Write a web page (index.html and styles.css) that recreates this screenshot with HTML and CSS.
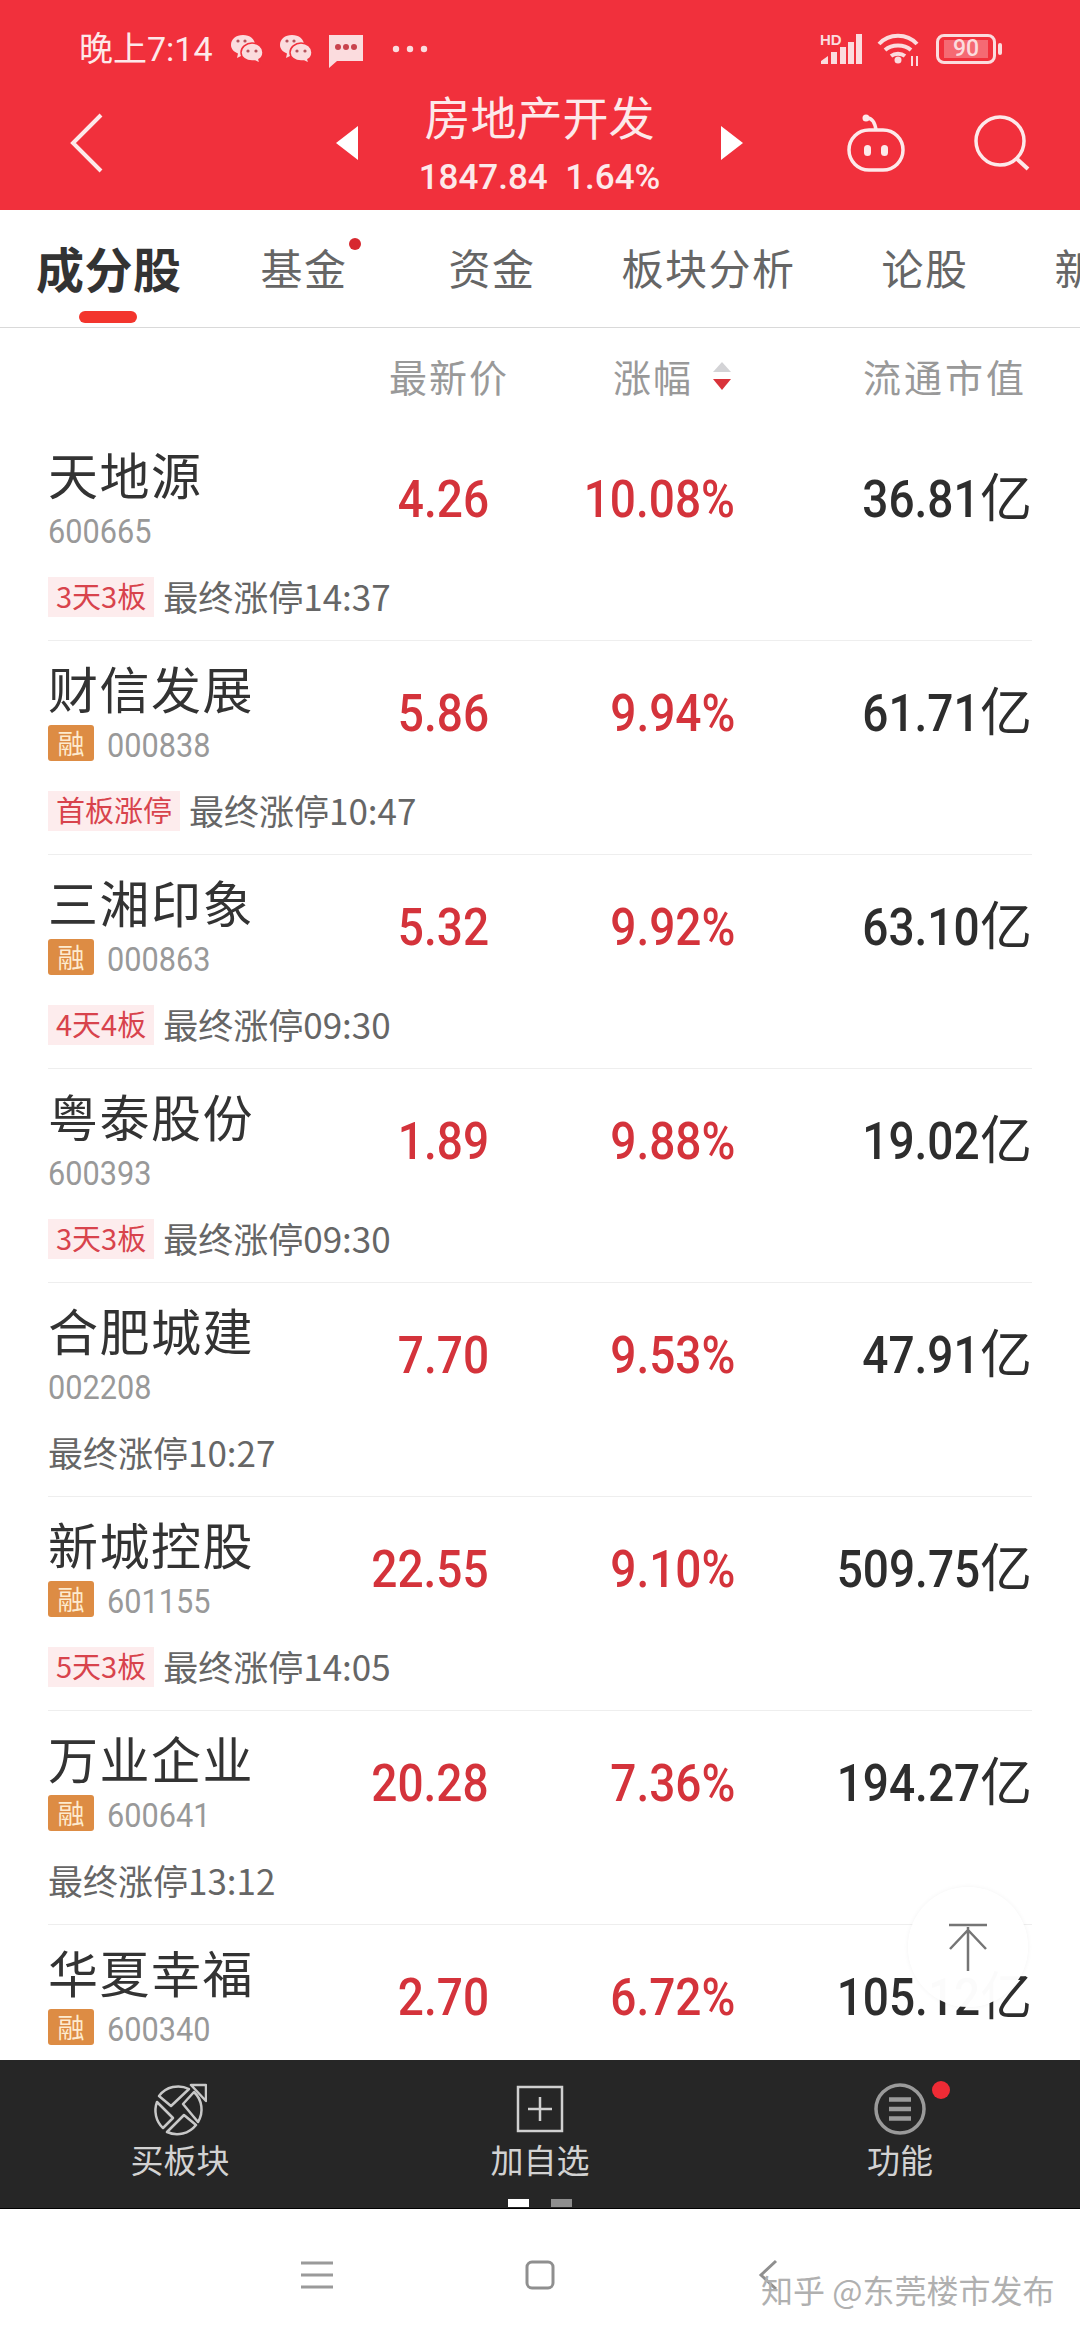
FILE: index.html
```html
<!DOCTYPE html>
<html lang="zh-CN">
<head>
    <meta charset="UTF-8">
    <meta name="viewport" content="width=device-width, initial-scale=1.0">
    <title>房地产开发</title>
    <link rel="stylesheet" href="styles.css">
</head>
<body>
    <div class="page">
        <header class="top">
            <div class="status">
                <span class="clock">晚上7:14</span>
                <svg class="st-wx" width="34" height="30" viewBox="0 0 34 30"><path d="M13 1c7 0 12 4 12 10 0 6-5 10-12 10l-6 3 1-4.500C4 18 1 15 1 11 1 5 6 1 13 1z" fill="#fbdcde"/><path d="M22 9c6 0 11 4 11 9.500 0 3-1.500 5.500-4 7l1 4-5-2.500h-3c-6 0-11-3.500-11-8.500S16 9 22 9z" fill="#fbdcde" stroke="#f1303c" stroke-width="1.500"/><circle cx="8" cy="7" r="1.600" fill="#b5525c"/><circle cx="15" cy="7" r="1.600" fill="#b5525c"/><circle cx="18" cy="17" r="1.600" fill="#b5525c"/><circle cx="26" cy="17" r="1.600" fill="#b5525c"/></svg>
                <svg class="st-wx" width="34" height="30" viewBox="0 0 34 30"><path d="M13 1c7 0 12 4 12 10 0 6-5 10-12 10l-6 3 1-4.500C4 18 1 15 1 11 1 5 6 1 13 1z" fill="#fbdcde"/><path d="M22 9c6 0 11 4 11 9.500 0 3-1.500 5.500-4 7l1 4-5-2.500h-3c-6 0-11-3.500-11-8.500S16 9 22 9z" fill="#fbdcde" stroke="#f1303c" stroke-width="1.500"/><circle cx="8" cy="7" r="1.600" fill="#b5525c"/><circle cx="15" cy="7" r="1.600" fill="#b5525c"/><circle cx="18" cy="17" r="1.600" fill="#b5525c"/><circle cx="26" cy="17" r="1.600" fill="#b5525c"/></svg>
                <svg class="st-msg" width="36" height="34" viewBox="0 0 36 34"><path d="M1 1h34v26H9l-8 7z" fill="#fbdcde"/><circle cx="10" cy="13" r="3" fill="#c9434d"/><circle cx="18" cy="13" r="3" fill="#c9434d"/><circle cx="26" cy="13" r="3" fill="#c9434d"/></svg>
                <svg class="st-more" width="36" height="8" viewBox="0 0 36 8"><circle cx="4" cy="4" r="3.200" fill="#fbdcde"/><circle cx="18" cy="4" r="3.200" fill="#fbdcde"/><circle cx="32" cy="4" r="3.200" fill="#fbdcde"/></svg>
                <svg class="st-signal" width="42" height="32" viewBox="0 0 42 32"><text x="0" y="12" class="hd">HD</text><path d="M1 31v-3l7-5v8zM11 31V19h6v12zM20 31V14h6v17zM28 31V9h6v22zM36 31V1h6v30z" fill="#fbdcde"/></svg>
                <svg class="st-wifi" width="44" height="34" viewBox="0 0 44 34"><g fill="none" stroke="#fbdcde" stroke-width="4"><path d="M2 12C12 1 30 1 40 12"/><path d="M8 18c7-6 19-6 26 0"/><path d="M14 24c4-3 10-3 14 0"/></g><circle cx="21" cy="28" r="3.500" fill="#fbdcde"/><path d="M35 24v10M40 24v10" stroke="#fbdcde" stroke-width="2"/></svg>
                <div class="battery"><span class="battery-fill">90</span></div>
                <span class="battery-nub"></span>
            </div>
            <div class="navrow">
                <div class="nav-left">
                    <svg width="33" height="60" viewBox="0 0 33 60"><path d="M31 2L3 30l28 28" fill="none" stroke="#fde9ea" stroke-width="4"/></svg>
                </div>
                <svg width="22" height="34" viewBox="0 0 22 34"><path d="M22 0v34L0 17z" fill="#fff"/></svg>
                <div class="nav-mid">
                    <div class="sector">房地产开发</div>
                    <div class="sector-sub">1847.84&nbsp;&nbsp;1.64%</div>
                </div>
                <svg width="22" height="34" viewBox="0 0 22 34"><path d="M0 0v34l22-17z" fill="#fff"/></svg>
                <svg class="robot" width="58" height="58" viewBox="0 0 58 58"><g fill="none" stroke="#fde9ea" stroke-width="3.500"><rect x="2" y="16" width="54" height="40" rx="20"/><path d="M20 4c5 0 8 5 9 12"/></g><circle cx="19" cy="4" r="3.500" fill="#fde9ea"/><rect x="17" y="31" width="7" height="11" rx="3.500" fill="#fde9ea"/><rect x="34" y="31" width="7" height="11" rx="3.500" fill="#fde9ea"/></svg>
                <svg class="search" width="56" height="56" viewBox="0 0 56 56"><circle cx="26" cy="26" r="24" fill="none" stroke="#fde9ea" stroke-width="3.500"/><path d="M43 44l11 10" stroke="#fde9ea" stroke-width="4"/></svg>
            </div>
        </header>

        <nav class="tabs">
            <span class="tab tab-on">成分股</span>
            <span class="tab tab-dot">基金</span>
            <span class="tab">资金</span>
            <span class="tab">板块分析</span>
            <span class="tab">论股</span>
            <span class="tab">新闻</span>
        </nav>

        <main class="list">
            <div class="head">
                <span class="head-name"></span>
                <span class="head-cell head-price">最新价</span>
                <span class="head-cell head-sort">涨幅
                    <svg width="18" height="28" viewBox="0 0 18 28"><path d="M9 0l9 10H0z" fill="#d3d3d6"/><path d="M0 17h18l-9 11z" fill="#d9333a"/></svg>
                </span>
                <span class="head-cell head-cap">流通市值</span>
            </div>

            <div class="row">
                <div class="stock"><div class="name">天地源</div><div class="code-line"><span class="code">600665</span></div></div>
                <div class="val"><span class="num">4.26</span></div>
                <div class="val"><span class="num">10.08%</span></div>
                <div class="val cap"><span class="num">36.81</span>亿</div>
                <div class="limit"><span class="tag">3天3板</span>最终涨停14:37</div>
            </div>
            <div class="row">
                <div class="stock"><div class="name">财信发展</div><div class="code-line"><span class="rong">融</span><span class="code">000838</span></div></div>
                <div class="val"><span class="num">5.86</span></div>
                <div class="val"><span class="num">9.94%</span></div>
                <div class="val cap"><span class="num">61.71</span>亿</div>
                <div class="limit"><span class="tag">首板涨停</span>最终涨停10:47</div>
            </div>
            <div class="row">
                <div class="stock"><div class="name">三湘印象</div><div class="code-line"><span class="rong">融</span><span class="code">000863</span></div></div>
                <div class="val"><span class="num">5.32</span></div>
                <div class="val"><span class="num">9.92%</span></div>
                <div class="val cap"><span class="num">63.10</span>亿</div>
                <div class="limit"><span class="tag">4天4板</span>最终涨停09:30</div>
            </div>
            <div class="row">
                <div class="stock"><div class="name">粤泰股份</div><div class="code-line"><span class="code">600393</span></div></div>
                <div class="val"><span class="num">1.89</span></div>
                <div class="val"><span class="num">9.88%</span></div>
                <div class="val cap"><span class="num">19.02</span>亿</div>
                <div class="limit"><span class="tag">3天3板</span>最终涨停09:30</div>
            </div>
            <div class="row">
                <div class="stock"><div class="name">合肥城建</div><div class="code-line"><span class="code">002208</span></div></div>
                <div class="val"><span class="num">7.70</span></div>
                <div class="val"><span class="num">9.53%</span></div>
                <div class="val cap"><span class="num">47.91</span>亿</div>
                <div class="limit">最终涨停10:27</div>
            </div>
            <div class="row">
                <div class="stock"><div class="name">新城控股</div><div class="code-line"><span class="rong">融</span><span class="code">601155</span></div></div>
                <div class="val"><span class="num">22.55</span></div>
                <div class="val"><span class="num">9.10%</span></div>
                <div class="val cap"><span class="num">509.75</span>亿</div>
                <div class="limit"><span class="tag">5天3板</span>最终涨停14:05</div>
            </div>
            <div class="row">
                <div class="stock"><div class="name">万业企业</div><div class="code-line"><span class="rong">融</span><span class="code">600641</span></div></div>
                <div class="val"><span class="num">20.28</span></div>
                <div class="val"><span class="num">7.36%</span></div>
                <div class="val cap"><span class="num">194.27</span>亿</div>
                <div class="limit">最终涨停13:12</div>
            </div>
            <div class="row">
                <div class="stock"><div class="name">华夏幸福</div><div class="code-line"><span class="rong">融</span><span class="code">600340</span></div></div>
                <div class="val"><span class="num">2.70</span></div>
                <div class="val"><span class="num">6.72%</span></div>
                <div class="val cap"><span class="num">105.12</span>亿</div>
            </div>

            <div class="to-top">
                <svg width="40" height="48" viewBox="0 0 40 48"><path d="M1 2h38M20 4v44M2 26L20 7l18 19" fill="none" stroke="#757575" stroke-width="2.500"/></svg>
            </div>
        </main>

        <footer class="bar">
            <div class="bar-items">
                <div class="bar-item">
                    <svg width="54" height="54" viewBox="0 0 54 54"><g fill="none" stroke="#c8c8c8" stroke-width="2.500" stroke-linejoin="round"><path d="M6 14A24 24 0 0 1 36 7L18 24z"/><path d="M4 20l16 16-10 10A24 24 0 0 1 4 20z"/><path d="M30 22l11-12A24 24 0 0 1 45 40z"/><path d="M31 33l12 10A24 24 0 0 1 14 50z"/><path d="M38 3h15v16z"/></g></svg>
                    <span class="bar-label">买板块</span>
                </div>
                <div class="bar-item">
                    <svg width="48" height="48" viewBox="0 0 48 48"><path d="M2 2h44v44H2zM24 12v24M12 24h24" fill="none" stroke="#d0d0d0" stroke-width="2.500"/></svg>
                    <span class="bar-label">加自选</span>
                </div>
                <div class="bar-item">
                    <svg width="52" height="52" viewBox="0 0 52 52"><circle cx="26" cy="26" r="24" fill="none" stroke="#9a9a9a" stroke-width="3.500"/><path d="M15 16.500h22M15 26h22M15 35.500h22" stroke="#9a9a9a" stroke-width="4.500"/></svg>
                    <span class="fn-dot"></span>
                    <span class="bar-label">功能</span>
                </div>
            </div>
            <div class="pager"><span class="page-on"></span><span class="page-off"></span></div>
        </footer>

        <div class="sysnav">
            <svg class="sys-menu" width="32" height="28" viewBox="0 0 32 28"><path d="M0 2h32M0 14h32M0 26h32" stroke="#9a9a9a" stroke-width="3"/></svg>
            <svg class="sys-home" width="30" height="30" viewBox="0 0 30 30"><rect x="2" y="2" width="26" height="26" rx="5" fill="none" stroke="#8f8f8f" stroke-width="3"/></svg>
            <svg class="sys-back" width="20" height="32" viewBox="0 0 20 32"><path d="M18 2L3 16l15 14" fill="none" stroke="#8f8f8f" stroke-width="3"/></svg>
            <span class="mark">知乎 @东莞楼市发布</span>
        </div>
    </div>
</body>
</html>
```

FILE: styles.css
```css
/* page frame */
body {
    margin: 0;
    background: #fff;
    font-family: "Noto Sans CJK SC", "Noto Sans", sans-serif;
}

.page {
    position: relative;
    width: 1080px;
    height: 2340px;
    display: flex;
    flex-direction: column;
    overflow: hidden;
}

/* red header */
.top {
    height: 210px;
    flex: none;
    background: #f1303c;
    color: #fde9ea;
}

.status {
    height: 90px;
    padding: 8px 0 0 79px;
    box-sizing: border-box;
    display: flex;
    align-items: center;
}

.clock {
    width: 151px;
    font-size: 34px;
    line-height: 44px;
    white-space: nowrap;
}

.clock, .sector-sub, .num, .code {
    font-family: Roboto, "Noto Sans CJK SC", sans-serif;
}

.st-wx {
    margin-right: 15px;
}

.st-msg {
    margin-top: 4px;
}

.st-more {
    margin-left: 28px;
}

.st-signal {
    margin-left: 392px;
    overflow: visible;
}

.st-wifi {
    margin-left: 15px;
}

.hd {
    font: bold 15px "Liberation Sans", sans-serif;
    fill: #fbdcde;
}

.battery {
    width: 60px;
    height: 30px;
    margin-left: 15px;
    padding: 3px 5px;
    box-sizing: border-box;
    border: 3px solid #fbdcde;
    border-radius: 8px;
}

.battery-fill {
    display: block;
    width: 44px;
    height: 18px;
    background: #f56a73;
    color: #fbdcde;
    font: 500 23px/18px Roboto, sans-serif;
    text-align: center;
}

.battery-nub {
    width: 4px;
    height: 12px;
    margin-left: 2px;
    background: #fbdcde;
    border-radius: 2px;
}

.navrow {
    height: 120px;
    padding-bottom: 14px;
    box-sizing: border-box;
    display: flex;
    align-items: center;
}

.nav-left {
    width: 336px;
    padding-left: 70px;
    box-sizing: border-box;
    display: flex;
}

.nav-mid {
    width: 363px;
    align-self: flex-start;
    text-align: center;
}

.sector {
    margin-top: -3px;
    font-size: 46px;
    line-height: 56px;
}

.sector-sub {
    margin-top: 13px;
    font-size: 35px;
    line-height: 44px;
    font-weight: 500;
}

.robot {
    margin-left: 104px;
}

.search {
    margin-left: 69px;
}

/* tabs */
.tabs {
    height: 118px;
    flex: none;
    padding: 0 0 4px 36px;
    box-sizing: border-box;
    display: flex;
    align-items: center;
    gap: 86px;
    border-bottom: 1px solid #d9d9d9;
    white-space: nowrap;
    overflow: hidden;
}

.tab {
    position: relative;
    flex: none;
    font-size: 42px;
    letter-spacing: 1.5px;
    color: #666;
}

.tab-on {
    margin-right: -7px;
    font-size: 48px;
    letter-spacing: 0.5px;
    font-weight: 700;
    color: #333;
}

.tab-on::after {
    content: "";
    position: absolute;
    left: 43px;
    bottom: -21px;
    width: 58px;
    height: 12px;
    border-radius: 6px;
    background: #f3352d;
}

.tab-dot {
    margin-right: 15px;
}

.tab-dot::after {
    content: "";
    position: absolute;
    right: -13px;
    top: 2px;
    width: 12px;
    height: 12px;
    border-radius: 50%;
    background: #d7282f;
}

/* stock list */
.list {
    position: relative;
    flex: 1;
    min-height: 0;
    overflow: hidden;
}

.head, .row {
    display: grid;
    grid-template-columns: 220px 221px 246px 297px;
    margin: 0 48px;
}

.head {
    height: 99px;
    padding-bottom: 4px;
    box-sizing: border-box;
    align-items: center;
}

.head-cell {
    font-size: 38px;
    letter-spacing: 2px;
    color: #999;
    text-align: right;
}

.head-price {
    margin-right: -20px;
}

.head-sort {
    display: flex;
    align-items: center;
    justify-content: flex-end;
    gap: 20px;
    margin-right: 4px;
}

.head-cap {
    padding-right: 5px;
    letter-spacing: 3px;
}

.row {
    height: 214px;
    padding-top: 22px;
    box-sizing: border-box;
    grid-template-rows: 104px 40px;
    row-gap: 24px;
    border-bottom: 1px solid #eee;
}

.row:last-of-type {
    border-bottom: 0;
}

.name {
    margin-top: -4px;
    font-size: 50px;
    line-height: 56px;
    color: #333;
    letter-spacing: 1.5px;
    white-space: nowrap;
}

.code-line {
    height: 48px;
    margin-top: 6px;
    display: flex;
    align-items: center;
}

.code {
    display: inline-block;
    font-size: 33px;
    color: #999;
    transform: scaleX(0.93);
    transform-origin: left center;
}

.rong {
    width: 46px;
    height: 36px;
    margin: -4px 13px 0 0;
    border-radius: 3px;
    background: #dd8c44;
    color: #fdebcf;
    font-size: 27px;
    line-height: 36px;
    text-align: center;
}

.val {
    margin-top: 16px;
    font-size: 52px;
    line-height: 60px;
    font-weight: 500;
    color: #d4333b;
    text-align: right;
}

.num {
    display: inline-block;
    transform: scaleX(0.885);
    transform-origin: right center;
}

.cap {
    color: #2d2d2d;
    font-weight: 400;
}

.cap .num {
    font-weight: 500;
}

.limit {
    grid-column: 1 / -1;
    height: 40px;
    padding-bottom: 4px;
    box-sizing: border-box;
    display: flex;
    align-items: center;
    font-size: 35px;
    color: #666;
}

.tag {
    align-self: flex-start;
    height: 40px;
    margin-right: 9px;
    padding: 0 8px;
    background: #fdeced;
    color: #d8434c;
    font-size: 29px;
    line-height: 36px;
    box-sizing: border-box;
}

.to-top {
    position: absolute;
    left: 908px;
    top: 1559px;
    width: 120px;
    height: 120px;
    display: flex;
    align-items: center;
    justify-content: center;
    border-radius: 50%;
    background: rgba(255, 255, 255, 0.985);
    box-shadow: 0 0 5px rgba(0, 0, 0, 0.05);
}

/* dark action bar */
.bar {
    height: 149px;
    flex: none;
    padding-top: 22px;
    box-sizing: border-box;
    background: #262626;
    border-bottom: 1px solid #000;
}

.bar-items {
    display: grid;
    grid-template-columns: 360px 360px 360px;
}

.bar-item {
    position: relative;
    display: flex;
    flex-direction: column;
    align-items: center;
    height: 101px;
}

.bar-item svg {
    height: 54px;
    flex: none;
}

.bar-label {
    margin-top: 3px;
    font-size: 33px;
    line-height: 40px;
    color: #d2d2d2;
}

.fn-dot {
    position: absolute;
    left: 212px;
    top: -1px;
    width: 18px;
    height: 18px;
    border-radius: 50%;
    background: #ef2b35;
}

.pager {
    margin-top: 16px;
    display: flex;
    justify-content: center;
    gap: 22px;
}

.pager span {
    width: 21px;
    height: 8px;
}

.page-on {
    background: #fff;
}

.page-off {
    background: #8e8e8e;
}

/* android nav */
.sysnav {
    position: relative;
    height: 131px;
    flex: none;
    padding-left: 301px;
    display: flex;
    align-items: center;
}

.sys-home {
    margin-left: 192px;
}

.sys-back {
    margin-left: 203px;
}

.mark {
    position: absolute;
    left: 761px;
    top: 60px;
    font-size: 32px;
    line-height: 40px;
    color: #b0b0b0;
    white-space: nowrap;
}
```
